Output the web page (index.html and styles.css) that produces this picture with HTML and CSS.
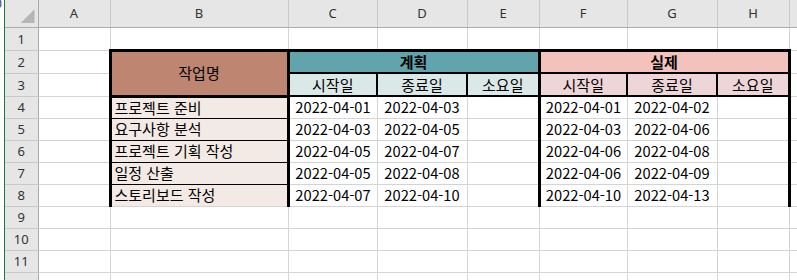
FILE: index.html
```html
<!DOCTYPE html>
<html lang="ko">
<head>
<meta charset="utf-8">
<title>일정표</title>
<link rel="stylesheet" href="styles.css">
</head>
<body>
<div class="app">
  <div class="edge"><span class="edge-glyph">0</span></div>
  <div class="sheet-wrap">
    <table class="sheet">
      <colgroup>
        <col class="w-rh"><col class="w-a"><col class="w-b"><col class="w-c"><col class="w-d"><col class="w-e"><col class="w-f"><col class="w-g"><col class="w-h"><col class="w-i">
      </colgroup>
      <thead>
        <tr class="r-head">
          <th class="corner"><div class="corner-in"><span class="tri"></span></div></th>
          <th class="ch">A</th><th class="ch">B</th><th class="ch">C</th><th class="ch">D</th><th class="ch">E</th><th class="ch">F</th><th class="ch">G</th><th class="ch">H</th><th class="ch"></th>
        </tr>
      </thead>
      <tbody>
        <tr class="r-tall">
          <th class="rh">1</th><td></td><td></td><td></td><td></td><td></td><td></td><td></td><td></td><td></td>
        </tr>
        <tr class="r-tall">
          <th class="rh">2</th><td></td>
          <td rowspan="2" class="task-head">작업명</td>
          <td colspan="3" class="group plan">계획</td>
          <td colspan="3" class="group actual">실제</td>
          <td></td>
        </tr>
        <tr class="r-tall">
          <th class="rh">3</th><td></td>
          <td class="sub plan-sub first">시작일</td><td class="sub plan-sub">종료일</td><td class="sub plan-sub last">소요일</td>
          <td class="sub act-sub first">시작일</td><td class="sub act-sub">종료일</td><td class="sub act-sub last">소요일</td>
          <td></td>
        </tr>
        <tr>
          <th class="rh">4</th><td></td><td class="task">프로젝트 준비</td>
          <td class="date first">2022-04-01</td><td class="date">2022-04-03</td><td class="date last"></td>
          <td class="date">2022-04-01</td><td class="date">2022-04-02</td><td class="date last"></td><td></td>
        </tr>
        <tr>
          <th class="rh">5</th><td></td><td class="task">요구사항 분석</td>
          <td class="date first">2022-04-03</td><td class="date">2022-04-05</td><td class="date last"></td>
          <td class="date">2022-04-03</td><td class="date">2022-04-06</td><td class="date last"></td><td></td>
        </tr>
        <tr>
          <th class="rh">6</th><td></td><td class="task">프로젝트 기획 작성</td>
          <td class="date first">2022-04-05</td><td class="date">2022-04-07</td><td class="date last"></td>
          <td class="date">2022-04-06</td><td class="date">2022-04-08</td><td class="date last"></td><td></td>
        </tr>
        <tr>
          <th class="rh">7</th><td></td><td class="task">일정 산출</td>
          <td class="date first">2022-04-05</td><td class="date">2022-04-08</td><td class="date last"></td>
          <td class="date">2022-04-06</td><td class="date">2022-04-09</td><td class="date last"></td><td></td>
        </tr>
        <tr>
          <th class="rh">8</th><td></td><td class="task task-last">스토리보드 작성</td>
          <td class="date first">2022-04-07</td><td class="date">2022-04-10</td><td class="date last"></td>
          <td class="date">2022-04-10</td><td class="date">2022-04-13</td><td class="date last"></td><td></td>
        </tr>
        <tr>
          <th class="rh">9</th><td></td><td></td><td></td><td></td><td></td><td></td><td></td><td></td><td></td>
        </tr>
        <tr>
          <th class="rh">10</th><td></td><td></td><td></td><td></td><td></td><td></td><td></td><td></td><td></td>
        </tr>
        <tr>
          <th class="rh">11</th><td></td><td></td><td></td><td></td><td></td><td></td><td></td><td></td><td></td>
        </tr>
        <tr>
          <th class="rh"></th><td></td><td></td><td></td><td></td><td></td><td></td><td></td><td></td><td></td>
        </tr>
      </tbody>
    </table>
  </div>
</div>
</body>
</html>
```

FILE: styles.css
```css
html, body {
  margin: 0;
  padding: 0;
  background: #ffffff;
}

body {
  width: 797px;
  height: 280px;
  overflow: hidden;
  font-family: "Noto Sans CJK KR", "Noto Sans", sans-serif;
  color: #000;
}

.app {
  display: flex;
  height: 280px;
}

.edge {
  flex: none;
  width: 4px;
  border-right: 1px solid #217346;
  overflow: hidden;
  background: #fff;
}

.edge-glyph {
  display: block;
  margin-left: -5px;
  margin-top: -3px;
  font: 12px/14px "Noto Sans", sans-serif;
  color: #3a2f8a;
}

.sheet-wrap {
  flex: 1;
  overflow: hidden;
}

.sheet {
  border-collapse: collapse;
  table-layout: fixed;
  width: 864px;
}

.w-rh { width: 33px; }
.w-a { width: 72px; }
.w-b { width: 178px; }
.w-c { width: 89px; }
.w-d { width: 90px; }
.w-e { width: 72px; }
.w-f { width: 88px; }
.w-g { width: 90px; }
.w-h { width: 72px; }
.w-i { width: 80px; }

.sheet td {
  border: 1px solid #d4d4d4;
  padding: 0 3px;
  white-space: nowrap;
  overflow: hidden;
  font-size: 15px;
  line-height: 18px;
  vertical-align: middle;
}

.r-head { height: 27px; }
.r-tall { height: 23px; }
.sheet tbody tr { height: 22px; }
.sheet tbody tr.r-tall { height: 23px; }

.sheet th {
  background: #e6e6e6;
  font-family: "Noto Sans", sans-serif;
  font-weight: normal;
  font-size: 13px;
  color: #333;
  padding: 0;
  line-height: 16px;
}

.ch {
  border-right: 1px solid #c9c9c9;
  border-bottom: 1px solid #ababab;
  text-align: center;
}

.rh {
  border-right: 1px solid #ababab;
  border-bottom: 1px solid #c9c9c9;
  text-align: center;
}

.corner {
  border-right: 1px solid #ababab;
  border-bottom: 1px solid #ababab;
}

.corner-in {
  display: flex;
  justify-content: flex-end;
  align-items: flex-end;
  height: 26px;
  padding: 0 3px 3px 0;
  box-sizing: border-box;
}

.tri {
  width: 14px;
  height: 14px;
  background: #b5b5b5;
  clip-path: polygon(100% 0, 100% 100%, 0 100%);
}

/* Header block */
.sheet td.task-head {
  background: #be8670;
  border: 3px solid #000;
  text-align: center;
}

.sheet td.group {
  border: 3px solid #000;
  border-bottom: 2px solid #000;
  text-align: center;
  font-weight: bold;
}

.plan { background: #61a4ab; }
.actual { background: #f4c2bc; }

.sheet td.sub {
  border: 2px solid #000;
  text-align: center;
}

.sheet td.sub.first { border-left: 3px solid #000; }
.sheet td.sub.last { border-right: 3px solid #000; }

.plan-sub { background: #dae8e8; }
.act-sub { background: #edd5d8; }

/* Body */
.sheet td.task {
  background: #f3e9e5;
  border-left: 3px solid #000;
  border-right: 3px solid #000;
  border-top: 1px solid #000;
  border-bottom: 1px solid #000;
  padding-left: 3px;
}

.sheet td.task.task-last {
  border-bottom: 1px solid #d4d4d4;
}

.sheet td.date {
  text-align: center;
  padding: 0;
  font-size: 14.67px;
}

.sheet td.date.first { border-left: 3px solid #000; }
.sheet td.date.last { border-right: 3px solid #000; }
```
